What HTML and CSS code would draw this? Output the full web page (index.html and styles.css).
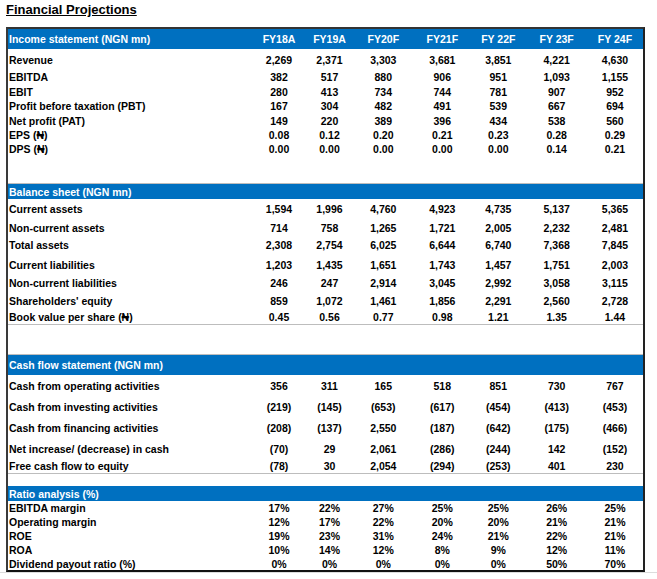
FILE: index.html
```html
<!DOCTYPE html>
<html lang="en">
<head>
<meta charset="utf-8">
<title>Financial Projections</title>
<link rel="stylesheet" href="styles.css">
</head>
<body>
<h1 class="title">Financial Projections</h1>
<div class="sheet">
  <div class="row head h20"><span class="lbl">Income statement (NGN mn)</span><span>FY18A</span><span>FY19A</span><span>FY20F</span><span>FY21F</span><span>FY 22F</span><span>FY 23F</span><span>FY 24F</span></div>
  <div class="row h21"><span class="lbl">Revenue</span><span>2,269</span><span>2,371</span><span>3,303</span><span>3,681</span><span>3,851</span><span>4,221</span><span>4,630</span></div>
  <div class="row h14"><span class="lbl">EBITDA</span><span>382</span><span>517</span><span>880</span><span>906</span><span>951</span><span>1,093</span><span>1,155</span></div>
  <div class="row h15"><span class="lbl">EBIT</span><span>280</span><span>413</span><span>734</span><span>744</span><span>781</span><span>907</span><span>952</span></div>
  <div class="row h14"><span class="lbl">Profit before taxation (PBT)</span><span>167</span><span>304</span><span>482</span><span>491</span><span>539</span><span>667</span><span>694</span></div>
  <div class="row h15"><span class="lbl">Net profit (PAT)</span><span>149</span><span>220</span><span>389</span><span>396</span><span>434</span><span>538</span><span>560</span></div>
  <div class="row h14"><span class="lbl">EPS (₦)</span><span>0.08</span><span>0.12</span><span>0.20</span><span>0.21</span><span>0.23</span><span>0.28</span><span>0.29</span></div>
  <div class="row h14"><span class="lbl">DPS (₦)</span><span>0.00</span><span>0.00</span><span>0.00</span><span>0.00</span><span>0.00</span><span>0.14</span><span>0.21</span></div>
  <div class="gap g27"></div>

  <div class="row head h15 sep-top"><span class="lbl">Balance sheet (NGN mn)</span></div>
  <div class="row h20"><span class="lbl">Current assets</span><span>1,594</span><span>1,996</span><span>4,760</span><span>4,923</span><span>4,735</span><span>5,137</span><span>5,365</span></div>
  <div class="row h17"><span class="lbl">Non-current assets</span><span>714</span><span>758</span><span>1,265</span><span>1,721</span><span>2,005</span><span>2,232</span><span>2,481</span></div>
  <div class="row h17"><span class="lbl">Total assets</span><span>2,308</span><span>2,754</span><span>6,025</span><span>6,644</span><span>6,740</span><span>7,368</span><span>7,845</span></div>
  <div class="gap g3"></div>
  <div class="row h18"><span class="lbl">Current liabilities</span><span>1,203</span><span>1,435</span><span>1,651</span><span>1,743</span><span>1,457</span><span>1,751</span><span>2,003</span></div>
  <div class="row h18"><span class="lbl">Non-current liabilities</span><span>246</span><span>247</span><span>2,914</span><span>3,045</span><span>2,992</span><span>3,058</span><span>3,115</span></div>
  <div class="row h17"><span class="lbl">Shareholders' equity</span><span>859</span><span>1,072</span><span>1,461</span><span>1,856</span><span>2,291</span><span>2,560</span><span>2,728</span></div>
  <div class="row h15 sep-bottom"><span class="lbl">Book value per share (₦)</span><span>0.45</span><span>0.56</span><span>0.77</span><span>0.98</span><span>1.21</span><span>1.35</span><span>1.44</span></div>
  <div class="gap g29"></div>

  <div class="row head h20 sep-top"><span class="lbl">Cash flow statement (NGN mn)</span></div>
  <div class="row h21"><span class="lbl">Cash from operating activities</span><span>356</span><span>311</span><span>165</span><span>518</span><span>851</span><span>730</span><span>767</span></div>
  <div class="row h21"><span class="lbl">Cash from investing activities</span><span>(219)</span><span>(145)</span><span>(653)</span><span>(617)</span><span>(454)</span><span>(413)</span><span>(453)</span></div>
  <div class="row h21"><span class="lbl">Cash from financing activities</span><span>(208)</span><span>(137)</span><span>2,550</span><span>(187)</span><span>(642)</span><span>(175)</span><span>(466)</span></div>
  <div class="row h21"><span class="lbl">Net increase/ (decrease) in cash</span><span>(70)</span><span>29</span><span>2,061</span><span>(286)</span><span>(244)</span><span>142</span><span>(152)</span></div>
  <div class="row h14 sep-bottom"><span class="lbl">Free cash flow to equity</span><span>(78)</span><span>30</span><span>2,054</span><span>(294)</span><span>(253)</span><span>401</span><span>230</span></div>
  <div class="gap g12"></div>

  <div class="row head h15"><span class="lbl">Ratio analysis (%)</span></div>
  <div class="row h14"><span class="lbl">EBITDA margin</span><span>17%</span><span>22%</span><span>27%</span><span>25%</span><span>25%</span><span>26%</span><span>25%</span></div>
  <div class="row h14"><span class="lbl">Operating margin</span><span>12%</span><span>17%</span><span>22%</span><span>20%</span><span>20%</span><span>21%</span><span>21%</span></div>
  <div class="row h14"><span class="lbl">ROE</span><span>19%</span><span>23%</span><span>31%</span><span>24%</span><span>21%</span><span>22%</span><span>21%</span></div>
  <div class="row h14"><span class="lbl">ROA</span><span>10%</span><span>14%</span><span>12%</span><span>8%</span><span>9%</span><span>12%</span><span>11%</span></div>
  <div class="row h13"><span class="lbl">Dividend payout ratio (%)</span><span>0%</span><span>0%</span><span>0%</span><span>0%</span><span>0%</span><span>50%</span><span>70%</span></div>
</div>
<div class="pageline"></div>
</body>
</html>
```

FILE: styles.css
```css
html, body {
  margin: 0;
  padding: 0;
  background: #ffffff;
}

body {
  font-family: "Liberation Sans", Arial, "DejaVu Sans", sans-serif;
  color: #000;
  width: 657px;
}

.title {
  margin: 0;
  padding: 2px 0 0 6px;
  font-size: 13px;
  line-height: 16px;
  font-weight: bold;
  text-decoration: underline;
  text-underline-offset: 1px;
}

.sheet {
  margin: 9px 0 0 6px;
  width: 635px;
  border-top: 2px solid #333;
  border-left: 2px solid #3a3a3a;
  border-right: 2px solid #222;
  border-bottom: 2px solid #111;
}

.row {
  display: grid;
  grid-template-columns: 245px 52px 49px 58.6px 59.4px 52.6px 64.2px 52.4px;
  align-items: center;
  font-size: 10.5px;
  font-weight: bold;
  line-height: 12px;
  white-space: nowrap;
}

.row span {
  text-align: center;
}

.row .lbl {
  text-align: left;
  padding-left: 1px;
}

.head {
  background: #0070c0;
  color: #fff;
}

.sep-top {
  border-top: 1px solid #bdbdbd;
}

.sep-bottom {
  border-bottom: 1px solid #bdbdbd;
}

.h13 { height: 13px; }
.h14 { height: 14px; }
.h15 { height: 15px; }
.h17 { height: 17px; }
.h18 { height: 18px; }
.h20 { height: 20px; }
.h21 { height: 21px; }

.gap { height: 0; }
.g3 { height: 3px; }
.g12 { height: 12px; }
.g27 { height: 27px; }
.g29 { height: 29px; }

.pageline {
  border-top: 1px solid #dcdcdc;
  width: 657px;
}
```
